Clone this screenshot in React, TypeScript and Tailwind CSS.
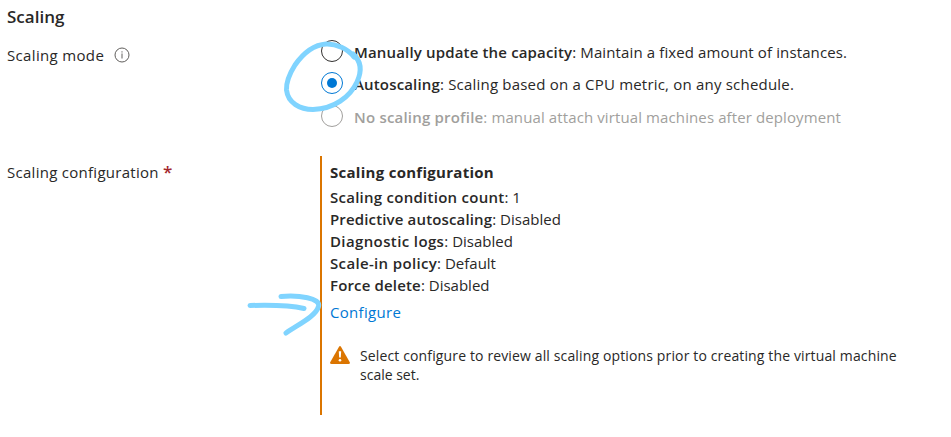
import type { ReactNode } from 'react';

function Radio({ className, checked }: { className: string; checked?: boolean }) {
  return (
    <span className={`flex size-[22px] shrink-0 items-center justify-center rounded-full border bg-white ${className}`}>
      {checked && <span className="size-[10px] rounded-full bg-[#0078d4]" />}
    </span>
  );
}

function Line({ label, value, tracking }: { label: string; value: string; tracking: string }) {
  return (
    <p>
      <span className={`font-semibold ${tracking}`}>{label}</span>: {value}
    </p>
  );
}

function Option({ radio, className, children }: { radio: ReactNode; className: string; children: ReactNode }) {
  return (
    <div className={`flex items-start gap-[11px] ${className}`}>
      {radio}
      <p className="mt-px leading-[22px]">{children}</p>
    </div>
  );
}

export default function App() {
  return (
    <main className="relative h-[437px] w-[951px] overflow-hidden bg-white font-['Open_Sans','Noto_Sans',sans-serif] text-[15px] leading-[22px] whitespace-nowrap text-[#292827]">
      <h2 className="h-10 pt-1.5 pl-[7px] text-[17px] font-semibold">Scaling</h2>
      <section className="flex h-[116px]">
        <div className="flex h-[30px] w-[321px] items-center gap-[10px] pl-[7px]">
          <span className="tracking-[0.34px]">Scaling mode</span>
          <svg className="size-4" viewBox="0 0 16 16" fill="none" stroke="#605e5c">
            <circle cx="8" cy="8" r="7" />
            <path d="M8 6.500V11.500M8 4.300V5.500" />
          </svg>
        </div>
        <div>
          <Option className="h-8 tracking-[0.12px]" radio={<Radio className="border-[#323130]" />}>
            <span className="font-semibold tracking-[0.16px]">Manually update the capacity</span>: Maintain a fixed amount of instances.
          </Option>
          <Option className="h-[33px] tracking-[0.2px]" radio={<Radio className="border-[#0078d4]" checked />}>
            <span className="font-semibold tracking-[0.16px]">Autoscaling</span>: Scaling based on a CPU metric, on any schedule.
          </Option>
          <Option className="h-[33px] tracking-[0.11px]" radio={<Radio className="border-[#a19f9d]" />}>
            <span className="text-[#a19f9d]"><span className="font-semibold tracking-[0.2px]">No scaling profile</span>: manual attach virtual machines after deployment</span>
          </Option>
        </div>
      </section>
      <section className="flex">
        <div className="w-[320px] pt-[5px] pl-[7px] tracking-[0.28px]">
          Scaling configuration <span className="text-[17px] leading-none font-semibold text-[#a4262c]">*</span>
        </div>
        <div className="h-[259px] border-l-2 border-[#db7500] pt-[5px] pl-2">
          <h3 className="mb-[3px] font-bold tracking-[0.28px]">Scaling configuration</h3>
          <Line label="Scaling condition count" value="1" tracking="tracking-[0.26px]" />
          <Line label="Predictive autoscaling" value="Disabled" tracking="tracking-[0.15px]" />
          <Line label="Diagnostic logs" value="Disabled" tracking="tracking-[0.38px]" />
          <Line label="Scale-in policy" value="Default" tracking="tracking-[0.34px]" />
          <Line label="Force delete" value="Disabled" tracking="tracking-[0.16px]" />
          <a className="mt-[5px] block tracking-[0.3px] text-[#0078d4]">Configure</a>
          <div className="mt-[23px] flex gap-[10px] text-[14px] leading-[19px]">
            <svg className="size-5" viewBox="0 0 20 20">
              <path d="M8.9.9Q10-.8 11.1.9L19.8 16.2Q20.4 18 18.500 18H1.500Q-.4 18 .2 16.2Z" fill="#db7500" />
              <path d="M8.8 5.3H11.2L10.8 11.6H9.2Z" fill="white" />
              <circle cx="10" cy="14.2" r="1.3" fill="white" />
            </svg>
            <p>
              <span className="tracking-[0.135px]">Select configure to review all scaling options prior to creating the virtual machine</span>
              <br />
              scale set.
            </p>
          </div>
        </div>
      </section>
      <svg className="pointer-events-none absolute inset-0" width="951" height="437" fill="none" stroke="#80d4ff" strokeLinecap="round" strokeLinejoin="round">
        <path d="M354 57C348 49 336 43.500 326 44C312 45 302 55 295 65C290 73 286 81 286.500 90C288 103 300 109.500 313 109.500C334 109 350 97 357 82C362 71 361 61 353 54" strokeWidth="5" />
        <path d="M250 305.500C267 305 289 305 304 308.500M281 296.500C299 295 321 298 318.500 306.500C316 316 299 324 286 333" strokeWidth="5" />
      </svg>
    </main>
  );
}
